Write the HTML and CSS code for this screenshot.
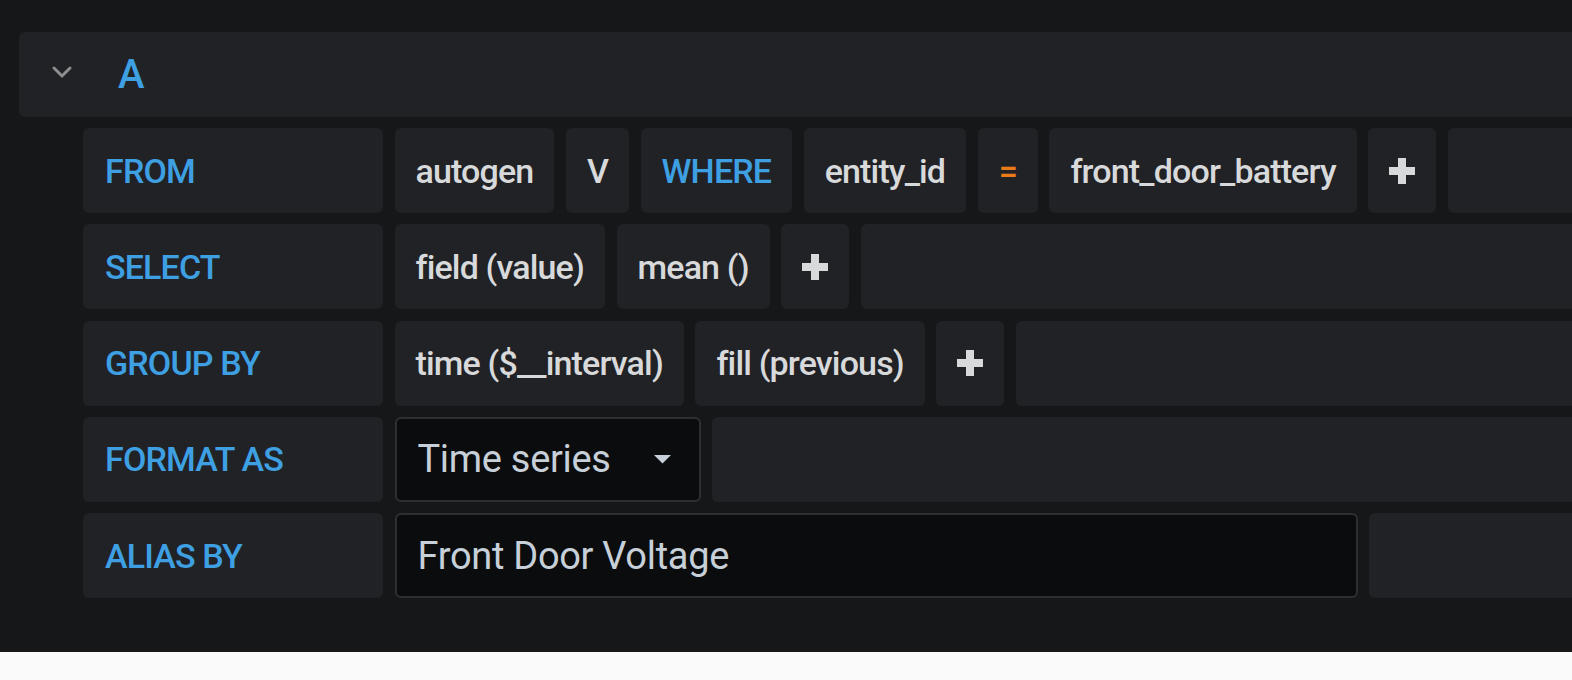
FILE: index.html
```html
<!DOCTYPE html>
<html>
<head>
<meta charset="utf-8">
<link rel="stylesheet" href="styles.css">
</head>
<body>
<div class="editor">
  <div class="query-header">
    <svg class="chev" width="20" height="12" viewBox="0 0 20 12"><path d="M2 2 L10 10 L18 2" fill="none" stroke="#8e8e8e" stroke-width="3" stroke-linecap="round" stroke-linejoin="round"/></svg>
    <span class="letter">A</span>
  </div>
  <div class="rows">
    <div class="row">
      <div class="label kw">FROM</div>
      <div class="seg">autogen</div>
      <div class="seg">V</div>
      <div class="seg kw">WHERE</div>
      <div class="seg">entity_id</div>
      <div class="seg op">=</div>
      <div class="seg">front_door_battery</div>
      <div class="seg plus"><svg width="26" height="26" viewBox="0 0 26 26"><path d="M13 0 V26 M0 13 H26" stroke="#d8d9da" stroke-width="8"/></svg></div>
      <div class="filler"></div>
    </div>
    <div class="row">
      <div class="label kw">SELECT</div>
      <div class="seg">field (value)</div>
      <div class="seg">mean ()</div>
      <div class="seg plus"><svg width="26" height="26" viewBox="0 0 26 26"><path d="M13 0 V26 M0 13 H26" stroke="#d8d9da" stroke-width="8"/></svg></div>
      <div class="filler"></div>
    </div>
    <div class="row">
      <div class="label kw">GROUP BY</div>
      <div class="seg">time ($__interval)</div>
      <div class="seg">fill (previous)</div>
      <div class="seg plus"><svg width="26" height="26" viewBox="0 0 26 26"><path d="M13 0 V26 M0 13 H26" stroke="#d8d9da" stroke-width="8"/></svg></div>
      <div class="filler"></div>
    </div>
    <div class="row">
      <div class="label kw">FORMAT AS</div>
      <div class="select"><span class="select-text">Time series</span><svg class="caret" width="19" height="10" viewBox="0 0 19 10"><path d="M1 1 H18 L9.5 9.5 Z" fill="#c7d0d9"/></svg></div>
      <div class="filler"></div>
    </div>
    <div class="row">
      <div class="label kw">ALIAS BY</div>
      <div class="input">Front Door Voltage</div>
      <div class="filler"></div>
    </div>
  </div>
</div>
</body>
</html>
```
FILE: styles.css
```css
body {
  margin: 0;
  background: #fafafa;
  font-family: Roboto, "Liberation Sans", sans-serif;
}

.editor {
  height: 652px;
  background: #161719;
  padding: 32px 0 0 19px;
  box-sizing: border-box;
  overflow: hidden;
}

.query-header {
  display: flex;
  align-items: center;
  height: 85px;
  background: #212226;
  border-radius: 6px 0 0 6px;
  margin-right: -20px;
  padding-left: 33px;
}

.chev {
  margin-top: -6px;
}

.letter {
  margin-left: 46px;
  font-size: 40px;
  font-weight: 500;
  color: #3ea0e3;
}

.rows {
  display: flex;
  flex-direction: column;
  gap: 11.25px;
  margin-top: 11px;
  padding-left: 64px;
}

.row {
  display: flex;
  gap: 11.5px;
  height: 85px;
  margin-right: -20px;
}

.label,
.seg {
  display: flex;
  align-items: center;
  flex-shrink: 0;
  box-sizing: border-box;
  background: #212226;
  border-radius: 6px;
  padding: 0 21px;
  font-size: 34px;
  font-weight: 500;
  letter-spacing: -0.85px;
  color: #d8d9da;
  white-space: nowrap;
}

.label {
  width: 300px;
  padding-left: 22px;
}

.kw {
  color: #3ea0e3;
}

.op {
  color: #eb7b18;
}

.filler {
  flex: 1;
  background: #212226;
  border-radius: 6px;
}

.select,
.input {
  display: flex;
  align-items: center;
  flex-shrink: 0;
  box-sizing: border-box;
  background: #0b0c0e;
  border: 2px solid #2c3035;
  border-radius: 6px;
  padding-left: 21px;
  font-size: 38px;
  font-weight: 400;
  letter-spacing: -0.3px;
  color: #c7d0d9;
}

.select {
  width: 306px;
}

.select-text {
  flex: 1;
}

.caret {
  margin-right: 27px;
}

.input {
  width: 963px;
}
```
